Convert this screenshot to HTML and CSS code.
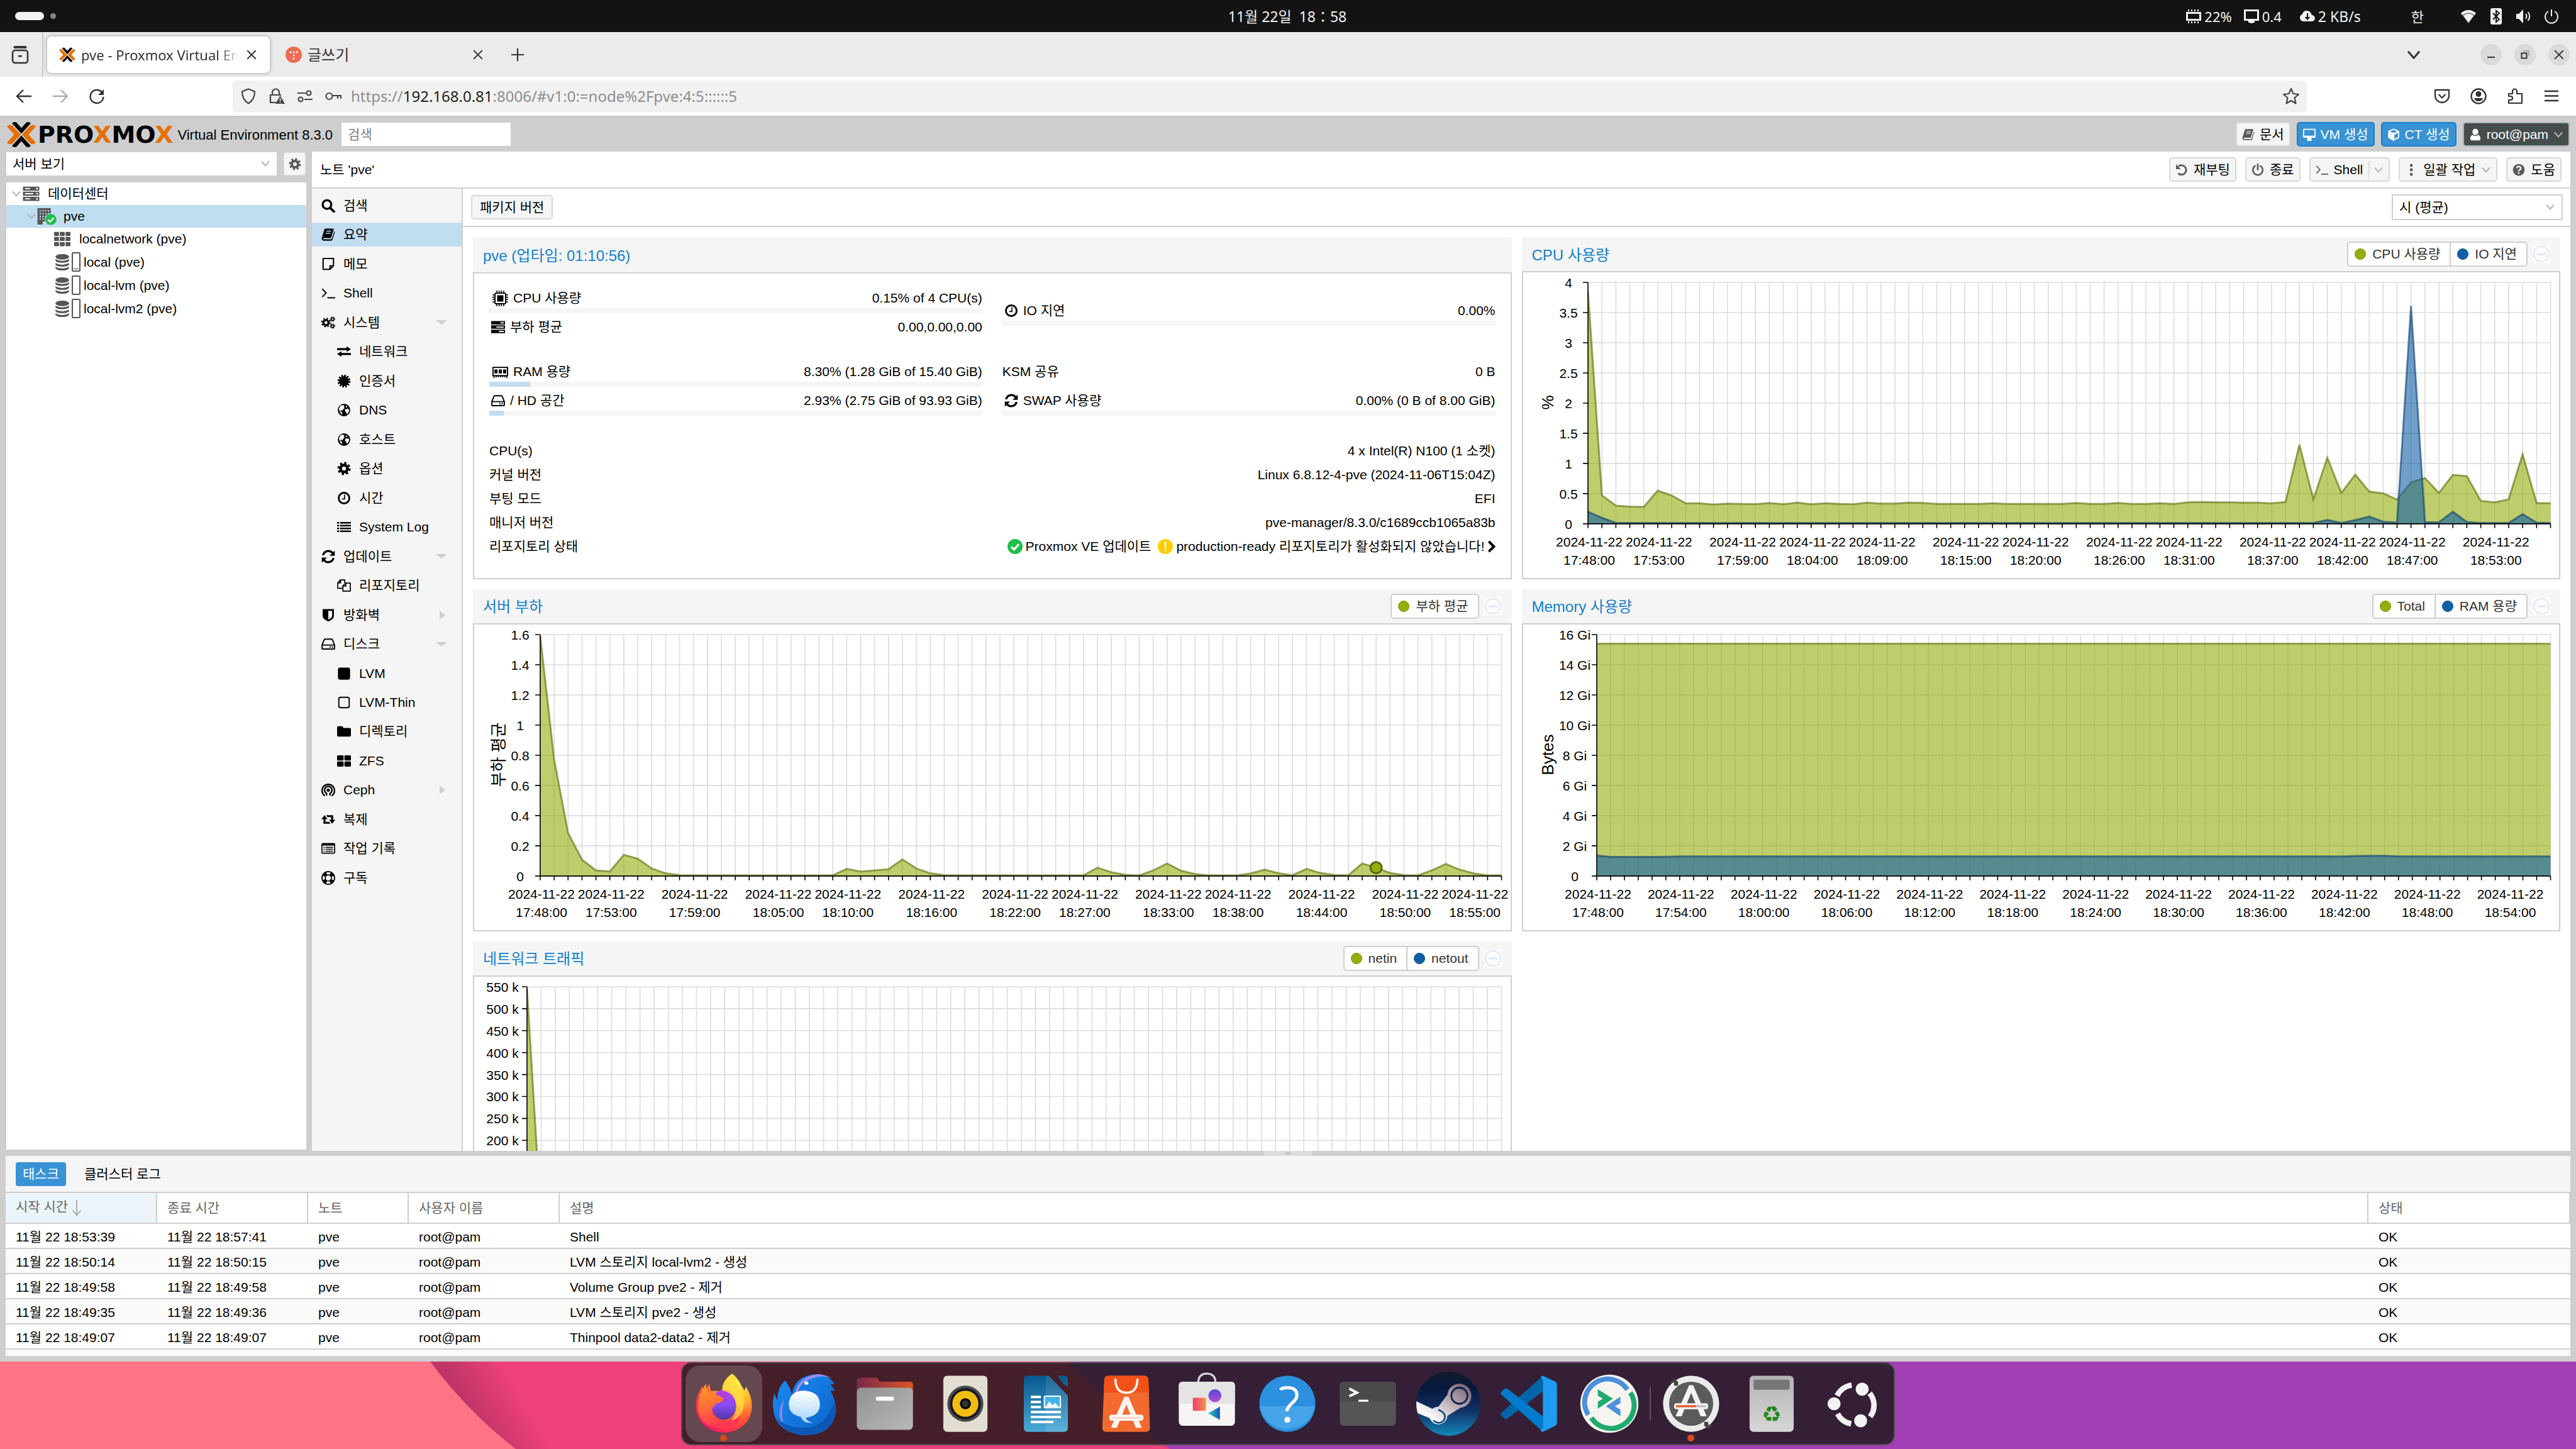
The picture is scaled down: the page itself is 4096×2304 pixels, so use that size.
FILE: index.html
```html
<!DOCTYPE html>
<html lang="ko">
<head>
<meta charset="utf-8">
<title>pve - Proxmox Virtual Environment</title>
<link rel="stylesheet" href="styles.css">
</head>
<body>
<svg class="sprite" aria-hidden="true">
  <symbol id="i-server" viewBox="0 0 16 16"><path fill-rule="evenodd" d="M0 1h16v4H0zM2 2.4v1.2h5V2.4zM13 2.2v1.6h1.5V2.2zM0 6h16v4H0zM2 7.4v1.2h8V7.4zM13 7.2v1.6h1.5V7.2zM0 11h16v4H0zM2 12.4v1.2h5v-1.2zM13 12.2v1.6h1.5v-1.6z"/></symbol>
  <symbol id="i-tasks" viewBox="0 0 16 16"><path fill-rule="evenodd" d="M0 1h16v4H0zM11 2.4v1.4h3.6V2.4zM0 6h16v4H0zM6 7.4v1.4h8.6V7.4zM0 11h16v4H0zM9 12.4v1.4h5.6v-1.4z"/></symbol>
  <symbol id="i-building" viewBox="0 0 16 16"><path fill-rule="evenodd" d="M1 0h13v16h-4v-3H6v3H1zM3 2v1.3h1.4V2zM5.700 2v1.3h1.4V2zM8.300 2v1.3h1.4V2zM11 2v1.300h1.400V2zM3 4.700V6h1.400V4.700zM5.700 4.700V6h1.400V4.700zM8.300 4.700V6h1.400V4.700zM11 4.700V6h1.400V4.700zM3 7.400v1.300h1.400V7.400zM5.700 7.400v1.300h1.400V7.400zM8.300 7.400v1.300h1.400V7.400zM11 7.400v1.300h1.400V7.400zM3 10v1.300h1.400V10zM5.700 10v1.300h1.400V10zM8.300 10v1.300h1.400V10zM11 10v1.300h1.400V10z"/></symbol>
  <symbol id="i-th" viewBox="0 0 16 16"><path d="M.6 1h3.600q.6 0 .6.600v2.800q0 .6-.6.600H.6Q0 5 0 4.400V1.600Q0 1 .6 1zM6.200 1h3.600q.6 0 .6.600v2.800q0 .6-.6.600H6.200q-.6 0-.6-.600V1.600q0-.6.6-.600zM11.800 1h3.600q.6 0 .6.600v2.800q0 .6-.6.600h-3.600q-.6 0-.6-.600V1.600q0-.6.6-.600zM.6 6h3.600q.6 0 .6.600v2.800q0 .6-.6.600H.6Q0 10 0 9.400V6.600Q0 6 .6 6zM6.200 6h3.600q.6 0 .6.600v2.800q0 .6-.6.600H6.200q-.6 0-.6-.600V6.600q0-.6.6-.600zM11.800 6h3.600q.6 0 .6.600v2.800q0 .6-.6.600h-3.600q-.6 0-.6-.600V6.600q0-.6.6-.600zM.6 11h3.600q.6 0 .6.600v2.800q0 .6-.6.600H.6Q0 15 0 14.400v-2.800Q0 11 .6 11zM6.200 11h3.600q.6 0 .6.600v2.800q0 .6-.6.600H6.200q-.6 0-.6-.600v-2.800q0-.6.6-.600zM11.800 11h3.600q.6 0 .6.600v2.800q0 .6-.6.600h-3.600q-.6 0-.6-.600v-2.800q0-.6.6-.600z"/></symbol>
  <symbol id="i-db" viewBox="0 0 16 18"><ellipse cx="8" cy="3" rx="7.500" ry="3"/><path d="M.5 5.500q7.500 4 15 0v1.800q-1.500 2.300-7.500 2.300T.5 7.300zM.5 9.800q7.500 4 15 0v1.800q-1.500 2.300-7.500 2.300T.5 11.600zM.5 14q7.500 4 15 0v1.500Q14 18 8 18T.5 15.500z"/></symbol>
  <symbol id="i-search" viewBox="0 0 16 16"><circle cx="6.500" cy="6.700" r="5" fill="none" stroke="currentColor" stroke-width="2.400"/><path d="M10 10.500l4.500 4.300" stroke="currentColor" stroke-width="2.800" stroke-linecap="round"/></symbol>
  <symbol id="i-book" viewBox="0 0 16 16"><path fill-rule="evenodd" d="M5 1h8.500q1 0 .7 1l-2.700 9q-.3 1-1.300 1H2.600q-.9 0-.6.800t1 .7h8.200q.7 0 .9-.7L15 4q.8.400.5 1.300l-2.700 8.700q-.4 1-1.400 1H2.500Q1 15 .5 13.300q-.2-1 0-1.500L3.500 2Q3.900 1 5 1zM6 3.500l-.3 1h5.500l.3-1zM5.300 6L5 7h5.500l.3-1z"/></symbol>
  <symbol id="i-note" viewBox="0 0 16 16"><path d="M2 1.500h12v8.500l-4 4H2zM14 10h-4v4" fill="none" stroke="currentColor" stroke-width="1.500" stroke-linejoin="round"/></symbol>
  <symbol id="i-term" viewBox="0 0 16 16"><path d="M1 3l4.500 5L1 12.500M7 13.500h9" fill="none" stroke="currentColor" stroke-width="1.400"/></symbol>
  <symbol id="i-cog" viewBox="0 0 16 16"><circle cx="8" cy="8" r="4" fill="none" stroke="currentColor" stroke-width="3.200"/><circle cx="8" cy="8" r="6.400" fill="none" stroke="currentColor" stroke-width="2.400" stroke-dasharray="2.620 2.406"/></symbol>
  <symbol id="i-cogs" viewBox="0 0 18 16"><g fill="none" stroke="currentColor"><circle cx="6" cy="8" r="3.300" stroke-width="2.600"/><circle cx="6" cy="8" r="5.200" stroke-width="2" stroke-dasharray="2.100 1.984"/><circle cx="14.500" cy="3.500" r="1.700" stroke-width="1.300"/><circle cx="14.500" cy="3.500" r="2.800" stroke-width="1.200" stroke-dasharray="1.200 1"/><circle cx="14.500" cy="12.500" r="1.700" stroke-width="1.300"/><circle cx="14.500" cy="12.500" r="2.800" stroke-width="1.200" stroke-dasharray="1.200 1"/></g></symbol>
  <symbol id="i-exchange" viewBox="0 0 16 16"><path d="M0 4h11V2l5 3.200-5 3.200V6.400H0zM16 9.600H5V7.600L0 10.800 5 14v-2h11z"/></symbol>
  <symbol id="i-cert" viewBox="0 0 16 16"><circle cx="8" cy="8" r="5.600"/><circle cx="8" cy="8" r="6.300" fill="none" stroke="currentColor" stroke-width="2.400" stroke-dasharray="1.900 1.399"/></symbol>
  <symbol id="i-globe" viewBox="0 0 16 16"><path fill-rule="evenodd" d="M8 .8a7.200 7.200 0 1 0 0 14.400A7.200 7.200 0 0 0 8 .8zM4 2.800L7 2.200l1.500 1-.8 1.600 1.200 1-2 1.200-.6 1.800-2-.8-.6 1.400 1.800.8.6 3-1.600-.8L2.800 9 2 6.500zM9.500 7l3-.6 1.500 1.200-.6 3-2 2.400-1-2.600-1.400-1.200zM10 3l2 1-.8 1-1.400-.6z"/></symbol>
  <symbol id="i-clock" viewBox="0 0 16 16"><circle cx="8" cy="8" r="6.200" fill="none" stroke="currentColor" stroke-width="2.100"/><path d="M8.700 4v5H5.600" fill="none" stroke="currentColor" stroke-width="1.200"/></symbol>
  <symbol id="i-list" viewBox="0 0 18 16"><path d="M0 1.500h2.600v2H0zM3.800 1.500H18v2H3.800zM0 5.200h2.600v2H0zM3.800 5.200H18v2H3.800zM0 8.900h2.600v2H0zM3.800 8.900H18v2H3.800zM0 12.600h2.600v2H0zM3.800 12.600H18v2H3.800z"/></symbol>
  <symbol id="i-refresh" viewBox="0 0 16 16"><path d="M2 6.500A6.200 6.200 0 0 1 13 4M14 9.500A6.200 6.200 0 0 1 3 12" fill="none" stroke="currentColor" stroke-width="2.400"/><path d="M15.500 1v6h-6zM.5 15V9h6z"/></symbol>
  <symbol id="i-copy" viewBox="0 0 18 16"><path d="M7.500 11.500H.8V4.500L4.300.8H10v4M.8 4.700h3.700V.9M7.500 15.200h9.700V4.800h-6L7.500 8.500zM7.600 8.700h3.800V5" fill="none" stroke="currentColor" stroke-width="1.400" stroke-linejoin="round"/></symbol>
  <symbol id="i-shield" viewBox="0 0 16 16"><path fill-rule="evenodd" d="M1.500 1h13v8q0 3.500-6.500 6.500Q1.500 12.500 1.500 9zM8 3v10.200q4.500-2.200 4.500-4.500V3z"/></symbol>
  <symbol id="i-hdd" viewBox="0 0 16 16"><path d="M.8 9.200L3.200 3q.2-.7 1-.7h7.600q.8 0 1 .7l2.400 6.200v4q0 .6-.6.600H1.400q-.6 0-.6-.600zM.8 9.200h14.400" fill="none" stroke="currentColor" stroke-width="1.400"/><path d="M9.400 10.700h1.500v1.500H9.400zM12 10.700h1.500v1.500H12z"/></symbol>
  <symbol id="i-square" viewBox="0 0 16 16"><rect x="1" y="1" width="14" height="14" rx="2.500"/></symbol>
  <symbol id="i-square-o" viewBox="0 0 16 16"><rect x="2" y="2" width="12" height="12" rx="2" fill="none" stroke="currentColor" stroke-width="1.400"/></symbol>
  <symbol id="i-folder" viewBox="0 0 16 16"><path d="M1.500 2h4q1.500 0 1.500 1.500V4h7.500Q16 4 16 5.500v7q0 1.500-1.500 1.500h-13Q0 14 0 12.500v-9Q0 2 1.500 2z"/></symbol>
  <symbol id="i-thl" viewBox="0 0 16 16"><rect x="0" y="1.500" width="7.500" height="6" rx="1"/><rect x="8.500" y="1.500" width="7.500" height="6" rx="1"/><rect x="0" y="8.500" width="7.500" height="6" rx="1"/><rect x="8.500" y="8.500" width="7.500" height="6" rx="1"/></symbol>
  <symbol id="i-ceph" viewBox="0 0 16 16"><g fill="none" stroke="currentColor" stroke-width="1.700"><path d="M4 14.800A7.200 7.200 0 1 1 12 14.800"/><path d="M6 14.500V12A4.300 4.300 0 1 1 10 12v2.500"/></g><circle cx="8" cy="8.200" r="1.900"/></symbol>
  <symbol id="i-retweet" viewBox="0 0 18 16"><path d="M4 2.500L8 7.500H5.300V11H10l2 2.500H2.700v-6H0zM14 13.500l-4-5h2.700V5H8L6 2.500h9.300v6H18z"/></symbol>
  <symbol id="i-listalt" viewBox="0 0 18 16"><rect x=".7" y="1.700" width="16.600" height="12.600" rx="1.200" fill="none" stroke="currentColor" stroke-width="1.400"/><path d="M1 1.500h16v2.800H1zM2.800 6h1.400v1.200H2.800zM5.400 6h9.800v1.200H5.400zM2.800 8.500h1.400v1.200H2.800zM5.400 8.500h9.800v1.200H5.400zM2.800 11h1.400v1.200H2.800zM5.400 11h9.800v1.200H5.400z"/></symbol>
  <symbol id="i-ring" viewBox="0 0 16 16"><g fill="none" stroke="currentColor"><circle cx="8" cy="8" r="7.300" stroke-width="1.300"/><circle cx="8" cy="8" r="3.600" stroke-width="1.200"/><circle cx="8" cy="8" r="5.500" stroke-width="3.600" stroke-dasharray="4.320 4.320" stroke-dashoffset="-2.160"/></g></symbol>
  <symbol id="i-cpu" viewBox="0 0 16 16"><rect x="2.600" y="2.600" width="10.800" height="10.800" rx="1" fill="none" stroke="currentColor" stroke-width="1.200"/><path d="M4.800 4.800h6.400v6.400H4.800zM4 0h1v2.500H4zM6.300 0h1v2.500h-1zM8.600 0h1v2.500h-1zM11 0h1v2.500h-1zM4 13.500h1V16H4zM6.300 13.500h1V16h-1zM8.600 13.500h1V16h-1zM11 13.500h1V16h-1zM0 4h2.500v1H0zM0 6.300h2.500v1H0zM0 8.600h2.500v1H0zM0 11h2.500v1H0zM13.500 4H16v1h-2.500zM13.500 6.300H16v1h-2.500zM13.500 8.600H16v1h-2.500zM13.500 11H16v1h-2.500z"/></symbol>
  <symbol id="i-ram" viewBox="0 0 16 16"><rect x=".6" y="3.300" width="14.800" height="8.400" fill="none" stroke="currentColor" stroke-width="1.200"/><path d="M2 5.500h3.200v4H2zM6.400 5.500h3.200v4H6.400zM10.800 5.500H14v4h-3.200zM1 12h1.200v2H1zM3.200 12h1.200v1.500H3.200zM5.400 12h1.200v1.500H5.400zM7.600 12h1.200v1.500H7.600zM9.800 12H11v1.500H9.800zM12 12h1.200v1.500H12zM14 12h1.200v2H14z"/></symbol>
  <symbol id="i-desktop" viewBox="0 0 16 16"><path fill-rule="evenodd" d="M1 .5h14q1 0 1 1V11q0 1-1 1h-4.500l.5 2.500V16H5v-1.500l.5-2.500H1q-1 0-1-1V1.500q0-1 1-1zM1.400 1.900v7.500h13.200V1.900z"/></symbol>
  <symbol id="i-cube" viewBox="0 0 16 16"><path fill-rule="evenodd" d="M8 .3l7 3v8.800l-7 3.800-7-3.800V3.300zM8 2L3.300 4 8 6l4.700-2zM9 8v5.600l4.600-2.500V5.800z"/></symbol>
  <symbol id="i-user" viewBox="0 0 16 16"><ellipse cx="8" cy="4.500" rx="3.700" ry="4"/><path d="M4.500 8.300Q8 11 11.500 8.300q3 1 3 5 0 2-2 2h-9q-2 0-2-2 0-4 3-5z"/></symbol>
  <symbol id="i-undo" viewBox="0 0 16 16"><path d="M4 3.500a6 6 0 1 1-.5 9" fill="none" stroke="currentColor" stroke-width="2.300"/><path d="M.8 1v6.200H7z"/></symbol>
  <symbol id="i-power" viewBox="0 0 16 16"><path d="M4.500 3.200a6.200 6.200 0 1 0 7 0M8 .8v7" fill="none" stroke="currentColor" stroke-width="2.100" stroke-linecap="round"/></symbol>
  <symbol id="i-dots" viewBox="0 0 16 16"><rect x="6.500" y=".5" width="3.200" height="3.600" rx=".8"/><rect x="6.500" y="6.200" width="3.200" height="3.600" rx=".8"/><rect x="6.500" y="11.900" width="3.200" height="3.600" rx=".8"/></symbol>
  <symbol id="i-help" viewBox="0 0 16 16"><circle cx="8" cy="8" r="7.500"/><path d="M5.500 6q.3-2.300 2.500-2.300T10.500 6q0 1.300-1.300 2T8 9.800" fill="none" stroke="#f5f5f5" stroke-width="1.900"/><path d="M7 11h2v2H7z" fill="#f5f5f5"/></symbol>
  <symbol id="i-down" viewBox="0 0 16 16"><path d="M2 4.500l6 7 6-7" fill="none" stroke="currentColor" stroke-width="2"/></symbol>
  <symbol id="i-ok" viewBox="0 0 16 16"><circle cx="8" cy="8" r="8" fill="#21bf4b"/><path d="M4 8.300L7 11.300l5-5.800" fill="none" stroke="#fff" stroke-width="2.200"/></symbol>
  <symbol id="i-warn" viewBox="0 0 16 16"><circle cx="8" cy="8" r="8" fill="#ffcc00"/><path d="M6.900 3h2.200L8.800 9.500H7.200zM7 11h2v2H7z" fill="#fff"/></symbol>
  <symbol id="i-next" viewBox="0 0 16 16"><path d="M5 1.500L11.500 8 5 14.500" fill="none" stroke="currentColor" stroke-width="3.200"/></symbol>
  <symbol id="i-x" viewBox="0 0 16 16"><path d="M3 3l10 10M13 3L3 13" fill="none" stroke="currentColor" stroke-width="1.500" stroke-linecap="round"/></symbol>
  <symbol id="i-collapse" viewBox="0 0 28 28"><rect width="28" height="28" fill="#fff" opacity=".6"/><circle cx="14" cy="14" r="12" fill="none" stroke="#dfe6f4" stroke-width="2"/><path d="M7 14h14" stroke="#dfe6f4" stroke-width="3"/></symbol>
  <symbol id="i-proxmox" viewBox="0 0 46 42"><path fill="#000" d="M8 3q3-3 7-1.500l8 9 8-9Q35 0 38 3L23 19.500zM8 39q3 3 7 1.500l8-9 8 9Q35 42 38 39L23 22.500z"/><path fill="#e57000" d="M0 8q4-4 9-1l13 14L9 35q-5 3-9-1l11.500-13zM46 8q-4-4-9-1L24 21l13 14q5 3 9-1L34.500 21z"/></symbol>
</svg>

<header class="sysbar">
  <div class="sysbar-left"><span class="ws-pill"></span><span class="ws-dot"></span></div>
  <time class="sysbar-clock">11월 22일&nbsp; 18：58</time>
  <div class="sysbar-right">
    <svg class="s26" viewBox="0 0 26 26"><path fill-rule="evenodd" d="M1 6h24v14H1zM4 9v8h18V9zM4 2h2v3H4zM9 2h2v3H9zM14 2h2v3h-2zM19 2h2v3h-2zM4 21h2v3H4zM9 21h2v3H9zM14 21h2v3h-2zM19 21h2v3h-2z"/></svg><span class="m1">22%</span>
    <svg class="s26" viewBox="0 0 26 26"><path fill-rule="evenodd" d="M2 2h22q1 0 1 1v17h-7v3h-3v1h-4v-1H8v-3H1V3q0-1 1-1zM4 5v12h18V5z"/></svg><span class="m2">0.4</span>
    <svg class="s26" viewBox="0 0 26 26"><path fill-rule="evenodd" d="M7 21q-6-.500-6-6 0-4 4-5.500Q6 4 12 4t7.500 6.500Q25 12 25 16q-.5 5-6 5zM12 8v6H8.500l4.500 5 4.500-5H14V8z"/></svg><span class="m3">2 KB/s</span>
    <span class="m4">한</span>
    <svg class="s26" viewBox="0 0 26 26"><path d="M1 8Q13-2 25 8L13 24z" opacity=".5"/><path d="M1 8Q13-2 25 8l-2.500 3Q13 3.500 3.500 11zM5 12q8-6 16 0l-8 11z"/></svg>
    <svg class="s26" viewBox="0 0 26 26"><rect x="4" y="0" width="18" height="26" rx="3"/><path d="M8 8l10 10-5 4V4l5 4L8 18" fill="none" stroke="#131313" stroke-width="2"/></svg>
    <svg class="s26" viewBox="0 0 26 26"><path d="M1 9h4l7-7v22l-7-7H1z"/><path d="M16 9q3 4 0 8M19.500 6q5.500 7 0 14" fill="none" stroke="currentColor" stroke-width="2"/></svg>
    <svg class="s26" viewBox="0 0 26 26"><path d="M8 5a10 10 0 1 0 10 0M13 2v11" fill="none" stroke="currentColor" stroke-width="2"/></svg>
  </div>
</header>

<div class="tabbar">
  <button class="tabview" aria-label="탭 목록"><svg class="s30" viewBox="0 0 30 30"><path d="M5 4h20M5 4q.5-2 2-2h16q1.500 0 2 2" fill="none" stroke="currentColor" stroke-width="2"/><rect x="3" y="8" width="24" height="20" rx="4" fill="none" stroke="currentColor" stroke-width="2.500"/><path d="M12 16h6v2.500h-6z"/></svg></button>
  <div class="tabs">
    <div class="tab active"><svg class="favicon" aria-hidden="true"><use href="#i-proxmox"/></svg><span class="tab-title">pve - Proxmox Virtual Env</span><button aria-label="탭 닫기"><svg class="s20"><use href="#i-x"/></svg></button></div>
    <div class="tab"><svg class="favicon" viewBox="0 0 26 26"><circle cx="13" cy="13" r="13" fill="#ee6a50"/><g fill="#fff"><circle cx="8" cy="9" r="1.600"/><circle cx="13" cy="9" r="1.600"/><circle cx="18" cy="9" r="1.600"/><circle cx="13" cy="14" r="1.600"/><circle cx="13" cy="19" r="1.600"/></g></svg><span class="tab-title">글쓰기</span><button aria-label="탭 닫기"><svg class="s20"><use href="#i-x"/></svg></button></div>
    <button class="newtab" aria-label="새 탭"><svg class="s20" viewBox="0 0 20 20"><path d="M10 0v20M0 10h20" stroke="currentColor" stroke-width="2.200"/></svg></button>
  </div>
  <div class="winctl">
    <button class="plain" aria-label="탭 보기"><svg class="s24"><use href="#i-down"/></svg></button>
    <button aria-label="최소화"><svg class="s16" viewBox="0 0 16 16"><path d="M2 12h12" stroke="currentColor" stroke-width="2"/></svg></button>
    <button aria-label="이전 크기"><svg class="s16" viewBox="0 0 16 16"><path d="M2.500 5.500h8v8h-8z" fill="none" stroke="currentColor" stroke-width="2"/><path d="M6 2h8v8" fill="none" stroke="#999" stroke-width="1.500"/></svg></button>
    <button aria-label="닫기"><svg class="s20"><use href="#i-x"/></svg></button>
  </div>
</div>

<nav class="navbar">
  <div class="navbtns">
    <button aria-label="뒤로"><svg class="s26" viewBox="0 0 26 26"><path d="M25 13H3M12 3L2 13l10 10" fill="none" stroke="currentColor" stroke-width="2.400"/></svg></button>
    <button class="dim" aria-label="앞으로"><svg class="s26" viewBox="0 0 26 26"><path d="M1 13h22M14 3l10 10-10 10" fill="none" stroke="currentColor" stroke-width="2.400"/></svg></button>
    <button aria-label="새로 고침"><svg class="s26" viewBox="0 0 26 26"><path d="M22 8a10.500 10.500 0 1 0 1.500 6" fill="none" stroke="currentColor" stroke-width="2.400"/><path d="M24 2v9h-9z"/></svg></button>
  </div>
  <div class="urlbar">
    <svg class="s26" viewBox="0 0 26 26"><path d="M13 1.500l10 4q0 13-10 19Q3 18.500 3 5.500z" fill="none" stroke="currentColor" stroke-width="2.200" stroke-linejoin="round"/></svg>
    <svg class="s26" viewBox="0 0 26 26"><path d="M12 23H3V11h17M6 11V7a5.500 5.500 0 0 1 11 0v4" fill="none" stroke="currentColor" stroke-width="2.200"/><path fill-rule="evenodd" d="M18.500 12L26 25H11zM17.700 16v5h1.600v-5zM17.700 22v1.600h1.600V22z"/></svg>
    <svg class="s26" viewBox="0 0 26 26"><g fill="none" stroke="currentColor" stroke-width="2.200"><path d="M1 8h13M12 18h13"/><circle cx="19" cy="8" r="3.500"/><circle cx="6" cy="18" r="3.500"/></g></svg>
    <svg class="s26" viewBox="0 0 26 26"><g fill="none" stroke="currentColor" stroke-width="2.200"><circle cx="6.500" cy="13" r="5"/><path d="M11.500 12H25v5M20 12v5"/></g></svg>
    <div class="url" role="textbox" aria-label="주소" tabindex="0">https://<b>192.168.0.81</b>:8006/#v1:0:=node%2Fpve:4:5::::::5</div>
    <svg class="s28" viewBox="0 0 28 28"><path d="M14 2l3.500 8 8.500 1-6.500 5.500 2 9L14 21l-7.500 4.500 2-9L2 11l8.500-1z" fill="none" stroke="currentColor" stroke-width="2.200" stroke-linejoin="round"/></svg>
  </div>
  <div class="navright">
    <svg class="s26" viewBox="0 0 26 26"><path d="M2 3h22v9a11 11 0 0 1-22 0zM7.500 10l5.500 5.500L18.500 10" fill="none" stroke="currentColor" stroke-width="2.300" stroke-linejoin="round"/></svg>
    <svg class="s26" viewBox="0 0 26 26"><circle cx="13" cy="13" r="11.500" fill="none" stroke="currentColor" stroke-width="2.300"/><circle cx="13" cy="9.500" r="4.500"/><path d="M6 16h14q-1 5-7 5t-7-5z"/></svg>
    <svg class="s26" viewBox="0 0 26 26"><path d="M3 9h6V5a3.500 3.500 0 0 1 7 0v4h8v15H3v-5h3a3 3 0 0 0 0-6H3z" fill="none" stroke="currentColor" stroke-width="2.200" stroke-linejoin="round"/></svg>
    <svg class="s26" viewBox="0 0 26 26"><path d="M2 5h22M2 12.500h22M2 20h22" stroke="currentColor" stroke-width="2.300"/></svg>
  </div>
</nav>

<div class="app">
  <header class="app-head">
    <svg class="logo-x" aria-hidden="true"><use href="#i-proxmox"/></svg>
    <span class="wordmark">PRO<i>X</i>MO<i>X</i></span>
    <span class="version">Virtual Environment 8.3.0</span>
    <input class="search" type="search" placeholder="검색" aria-label="검색">
    <div class="head-btns">
      <button class="btn"><svg class="icon"><use href="#i-book"/></svg>문서</button>
      <button class="btn blue"><svg class="icon"><use href="#i-desktop"/></svg>VM 생성</button>
      <button class="btn blue"><svg class="icon"><use href="#i-cube"/></svg>CT 생성</button>
      <button class="btn dark"><svg class="icon"><use href="#i-user"/></svg>root@pam<svg class="caret"><use href="#i-down"/></svg></button>
    </div>
  </header>

  <div class="main">
    <aside class="side">
      <div class="side-top">
        <div class="combo view"><select aria-label="보기"><option>서버 보기</option></select><svg class="caret"><use href="#i-down"/></svg></div>
        <button class="btn gear" aria-label="설정"><svg class="icon"><use href="#i-cog"/></svg></button>
      </div>
      <ul class="tree">
        <li class="l0"><svg class="twist"><use href="#i-down"/></svg><svg class="ticon"><use href="#i-server"/></svg><a href="#dc">데이터센터</a></li>
        <li class="l1 sel"><svg class="twist"><use href="#i-down"/></svg><span class="node"><svg class="ticon"><use href="#i-building"/></svg><svg class="badge"><use href="#i-ok"/></svg></span><a href="#pve">pve</a></li>
        <li class="l2"><svg class="ticon"><use href="#i-th"/></svg><a class="net" href="#net">localnetwork (pve)</a></li>
        <li class="l2 st"><svg class="ticon"><use href="#i-db"/></svg><span class="gauge used"></span><a href="#local">local (pve)</a></li>
        <li class="l2 st"><svg class="ticon"><use href="#i-db"/></svg><span class="gauge"></span><a href="#lvm">local-lvm (pve)</a></li>
        <li class="l2 st"><svg class="ticon"><use href="#i-db"/></svg><span class="gauge"></span><a href="#lvm2">local-lvm2 (pve)</a></li>
      </ul>
    </aside>

    <section class="content">
      <header class="content-head">
        <h1>노트 'pve'</h1>
        <button class="btn"><svg class="icon"><use href="#i-undo"/></svg>재부팅</button>
        <button class="btn"><svg class="icon"><use href="#i-power"/></svg>종료</button>
        <button class="btn split"><svg class="icon"><use href="#i-term"/></svg>Shell<svg class="caret"><use href="#i-down"/></svg></button>
        <button class="btn"><svg class="icon"><use href="#i-dots"/></svg>일괄 작업<svg class="caret"><use href="#i-down"/></svg></button>
        <button class="btn"><svg class="icon"><use href="#i-help"/></svg>도움</button>
      </header>
      <div class="content-body">
        <nav class="menu">
          <a href="#search"><svg class="icon"><use href="#i-search"/></svg>검색</a>
          <a href="#summary" class="sel"><svg class="icon"><use href="#i-book"/></svg>요약</a>
          <a href="#notes"><svg class="icon"><use href="#i-note"/></svg>메모</a>
          <a href="#shell"><svg class="icon"><use href="#i-term"/></svg>Shell</a>
          <a href="#system" class="open"><svg class="icon"><use href="#i-cogs"/></svg>시스템</a>
          <a href="#network" class="sub"><svg class="icon"><use href="#i-exchange"/></svg>네트워크</a>
          <a href="#certs" class="sub"><svg class="icon"><use href="#i-cert"/></svg>인증서</a>
          <a href="#dns" class="sub"><svg class="icon"><use href="#i-globe"/></svg>DNS</a>
          <a href="#hosts" class="sub"><svg class="icon"><use href="#i-globe"/></svg>호스트</a>
          <a href="#options" class="sub"><svg class="icon"><use href="#i-cog"/></svg>옵션</a>
          <a href="#time" class="sub"><svg class="icon"><use href="#i-clock"/></svg>시간</a>
          <a href="#syslog" class="sub"><svg class="icon"><use href="#i-list"/></svg>System Log</a>
          <a href="#updates" class="open"><svg class="icon"><use href="#i-refresh"/></svg>업데이트</a>
          <a href="#repos" class="sub"><svg class="icon"><use href="#i-copy"/></svg>리포지토리</a>
          <a href="#firewall" class="closed"><svg class="icon"><use href="#i-shield"/></svg>방화벽</a>
          <a href="#disks" class="open"><svg class="icon"><use href="#i-hdd"/></svg>디스크</a>
          <a href="#lvm-disks" class="sub"><svg class="icon"><use href="#i-square"/></svg>LVM</a>
          <a href="#lvmthin" class="sub"><svg class="icon"><use href="#i-square-o"/></svg>LVM-Thin</a>
          <a href="#directory" class="sub"><svg class="icon"><use href="#i-folder"/></svg>디렉토리</a>
          <a href="#zfs" class="sub"><svg class="icon"><use href="#i-thl"/></svg>ZFS</a>
          <a href="#ceph" class="closed"><svg class="icon"><use href="#i-ceph"/></svg>Ceph</a>
          <a href="#replication"><svg class="icon"><use href="#i-retweet"/></svg>복제</a>
          <a href="#tasks"><svg class="icon"><use href="#i-listalt"/></svg>작업 기록</a>
          <a href="#subscription"><svg class="icon"><use href="#i-ring"/></svg>구독</a>
        </nav>

        <div class="summary">
          <div class="summary-bar">
            <button class="btn">패키지 버전</button>
            <div class="combo range"><select aria-label="기간"><option>시 (평균)</option></select><svg class="caret"><use href="#i-down"/></svg></div>
          </div>
          <div class="panels">
            <section class="panel status">
              <h2>pve (업타임: 01:10:56)</h2>
              <div class="status-body">
                <div class="meters">
                  <div class="meter"><span><svg class="big"><use href="#i-cpu"/></svg>CPU 사용량</span><span>0.15% of 4 CPU(s)</span><div class="bar"><div style="width:0.15%"></div></div></div>
                  <div class="meter"><span><svg><use href="#i-tasks"/></svg>부하 평균</span><span>0.00,0.00,0.00</span></div>
                  <div class="meter gap"><span><svg class="big"><use href="#i-ram"/></svg>RAM 용량</span><span>8.30% (1.28 GiB of 15.40 GiB)</span><div class="bar"><div style="width:8.3%"></div></div></div>
                  <div class="meter"><span><svg><use href="#i-hdd"/></svg>/ HD 공간</span><span>2.93% (2.75 GiB of 93.93 GiB)</span><div class="bar"><div style="width:2.93%"></div></div></div>
                </div>
                <div class="meters right">
                  <div class="meter io"><span><svg><use href="#i-clock"/></svg>IO 지연</span><span>0.00%</span><div class="bar"></div></div>
                  <div class="meter"><span>KSM 공유</span><span>0 B</span></div>
                  <div class="meter"><span><svg><use href="#i-refresh"/></svg>SWAP 사용량</span><span>0.00% (0 B of 8.00 GiB)</span><div class="bar"></div></div>
                </div>
                <dl>
                  <div><dt>CPU(s)</dt><dd>4 x Intel(R) N100 (1 소켓)</dd></div>
                  <div><dt>커널 버전</dt><dd>Linux 6.8.12-4-pve (2024-11-06T15:04Z)</dd></div>
                  <div><dt>부팅 모드</dt><dd>EFI</dd></div>
                  <div><dt>매니저 버전</dt><dd>pve-manager/8.3.0/c1689ccb1065a83b</dd></div>
                  <div><dt>리포지토리 상태</dt><dd><svg><use href="#i-ok"/></svg>Proxmox VE 업데이트<svg class="second"><use href="#i-warn"/></svg>production-ready 리포지토리가 활성화되지 않았습니다!<svg class="nxt"><use href="#i-next"/></svg></dd></div>
                </dl>
              </div>
            </section>

            <section class="panel">
              <header><h2>CPU 사용량</h2><ul class="legend"><li class="g">CPU 사용량</li><li class="b">IO 지연</li></ul><svg class="collapse"><use href="#i-collapse"/></svg></header>
              <svg class="chart" id="chart-cpu" viewBox="0 0 1648 486"></svg>
            </section>
            <section class="panel">
              <header><h2>서버 부하</h2><ul class="legend"><li class="g">부하 평균</li></ul><svg class="collapse"><use href="#i-collapse"/></svg></header>
              <svg class="chart" id="chart-load" viewBox="0 0 1648 486"></svg>
            </section>
            <section class="panel">
              <header><h2>Memory 사용량</h2><ul class="legend"><li class="g">Total</li><li class="b">RAM 용량</li></ul><svg class="collapse"><use href="#i-collapse"/></svg></header>
              <svg class="chart" id="chart-mem" viewBox="0 0 1648 486"></svg>
            </section>
            <section class="panel">
              <header><h2>네트워크 트래픽</h2><ul class="legend"><li class="g">netin</li><li class="b">netout</li></ul><svg class="collapse"><use href="#i-collapse"/></svg></header>
              <svg class="chart" id="chart-net" viewBox="0 0 1648 486"></svg>
            </section>
          </div>
        </div>
      </div>
    </section>
  </div>

  <div class="splitter"><span><svg viewBox="0 0 16 8"><path d="M2 2h12l-6 5z"/></svg></span></div>
  <section class="log">
    <div class="log-tabs"><button class="on">태스크</button><button>클러스터 로그</button></div>
    <table>
      <colgroup><col class="c-time"><col class="c-end"><col class="c-node"><col class="c-user"><col><col class="c-state"></colgroup>
      <thead><tr><th class="sorted">시작 시간<svg class="sort" viewBox="0 0 16 28"><path d="M8 0v26M1 18l7 8 7-8" fill="none" stroke="#aaa" stroke-width="2"/></svg></th><th>종료 시간</th><th>노트</th><th>사용자 이름</th><th>설명</th><th>상태</th></tr></thead>
      <tbody>
        <tr><td>11월 22 18:53:39</td><td>11월 22 18:57:41</td><td>pve</td><td>root@pam</td><td>Shell</td><td>OK</td></tr>
        <tr><td>11월 22 18:50:14</td><td>11월 22 18:50:15</td><td>pve</td><td>root@pam</td><td>LVM 스토리지 local-lvm2 - 생성</td><td>OK</td></tr>
        <tr><td>11월 22 18:49:58</td><td>11월 22 18:49:58</td><td>pve</td><td>root@pam</td><td>Volume Group pve2 - 제거</td><td>OK</td></tr>
        <tr><td>11월 22 18:49:35</td><td>11월 22 18:49:36</td><td>pve</td><td>root@pam</td><td>LVM 스토리지 pve2 - 생성</td><td>OK</td></tr>
        <tr><td>11월 22 18:49:07</td><td>11월 22 18:49:07</td><td>pve</td><td>root@pam</td><td>Thinpool data2-data2 - 제거</td><td>OK</td></tr>
      </tbody>
    </table>
  </section>
</div>

<footer class="desktop">
  <svg class="wallpaper" viewBox="0 0 4096 139" preserveAspectRatio="none" aria-hidden="true">
    <defs><linearGradient id="shade" gradientUnits="userSpaceOnUse" x1="742" y1="70" x2="812" y2="30"><stop offset="0" stop-color="#bf3567"/><stop offset="1" stop-color="#ee407a"/></linearGradient></defs>
    <path d="M0 0h4096v139H0z" fill="url(#shade)"/>
    <path d="M1697 0Q1770 75 1860 139H4096V0z" fill="#a23fb4"/>
    <path d="M0 0h684q58 78 136 139H0z" fill="#ff7387"/>
  </svg>
  <div class="dock">
    <button class="on run" aria-label="Firefox"><svg viewBox="0 0 128 128"><defs><radialGradient id="ff" cx=".75" cy=".15" r="1"><stop offset="0" stop-color="#fff44f"/><stop offset=".35" stop-color="#ffb02e"/><stop offset=".62" stop-color="#ff5634"/><stop offset=".85" stop-color="#ff2a55"/><stop offset="1" stop-color="#e5007d"/></radialGradient><linearGradient id="fp" x1="0" y1="0" x2="0" y2="1"><stop offset="0" stop-color="#c238d8"/><stop offset=".5" stop-color="#8a4cf5"/><stop offset="1" stop-color="#4b37a5"/></linearGradient><linearGradient id="fo" x1="0" y1="0" x2=".3" y2="1"><stop offset="0" stop-color="#ffa61c"/><stop offset=".5" stop-color="#ff7139"/><stop offset="1" stop-color="#ff3750"/></linearGradient></defs><path d="M81 4q12 10 18 24l6 10 3-8q12 18 12 39a56 52 0 0 1-112 2q-1-22 13-42l4 8 10-12 3 14q10-2 22 2 2-26 21-37z" fill="url(#ff)"/><ellipse cx="64" cy="66" rx="25" ry="30" fill="url(#fp)"/><path d="M29 23q-2 12 4 20 12-2 17 4 6 1 14 7-2 8-16 10-14 14-4 27 16 18 36 4 12-12 8-30 14 16 6 34-12 18-42 14Q16 108 12 74q0-28 17-51z" fill="url(#fo)"/><path d="M81 4q-22 14-20 34 24 4 28 30 0 18-10 30 30-10 24-52Q92 30 81 4z" fill="#ffdf3d" opacity=".75"/></svg></button>
    <button aria-label="Thunderbird"><svg viewBox="0 0 128 128"><defs><linearGradient id="tb" x1="0" y1="0" x2="1" y2="1"><stop offset="0" stop-color="#1b8cf0"/><stop offset="1" stop-color="#0c62cc"/></linearGradient><linearGradient id="te" x1="0" y1="0" x2="0" y2="1"><stop offset="0" stop-color="#fff"/><stop offset="1" stop-color="#a5d5fb"/></linearGradient></defs><path d="M25 18q12 12 14 30 4-42 53-43 24 4 32 20l-8 0 9 13-9 0q12 22 11 42-6 46-62 47Q2 122 1 66q0-12 3-22l6 14q0-26 15-40z" fill="url(#tb)"/><path d="M6 90Q24 112 64 112q44-2 60-52 8 28-10 48-20 19-49 19-40-2-59-37z" fill="#0b57b5"/><path d="M43 56Q46 10 92 5q18 2 26 8-14-6-30-2-34 8-36 30z" fill="#9d8ef5"/><path d="M22 58Q8 80 18 102q2-24 4-44z" fill="#7a86ee"/><path d="M22 100q-8-18 0-42" fill="none" stroke="#8d8af0" stroke-width="2"/><ellipse cx="68" cy="23" rx="4" ry="3.500" fill="#fff"/><path d="M64 38q31 2 31 28 0 22-28 26 2 8 14 10-20 2-24-12-24-4-24-26 2-26 31-26z" fill="url(#te)"/><path d="M37 53l27 22 27-22" fill="none" stroke="#dcecfb" stroke-width="3"/></svg></button>
    <button aria-label="파일"><svg viewBox="0 0 128 128"><defs><linearGradient id="fl"><stop offset="0" stop-color="#77294f"/><stop offset="1" stop-color="#e0521f"/></linearGradient><linearGradient id="fg" x1="0" y1="0" x2="1" y2="1"><stop offset="0" stop-color="#929292"/><stop offset="1" stop-color="#b8b8b8"/></linearGradient></defs><path d="M14 12h32q4 0 5 4l3 4h60q6 0 6 6v30H8V18q0-6 6-6z" fill="url(#fl)"/><rect x="8" y="32" width="112" height="84" rx="8" fill="url(#fg)"/><rect x="46" y="50" width="36" height="8" rx="3" fill="#fff"/></svg></button>
    <button aria-label="리듬박스"><svg viewBox="0 0 128 128"><rect x="20" y="8" width="88" height="112" rx="8" fill="#e3ded3"/><circle cx="64" cy="64" r="36" fill="#4a4a4a"/><circle cx="64" cy="64" r="31" fill="#171722"/><circle cx="64" cy="64" r="26" fill="#f2bd12"/><circle cx="64" cy="64" r="11" fill="#050505"/><circle cx="64" cy="64" r="7" fill="#333"/></svg></button>
    <button aria-label="Writer"><svg viewBox="0 0 128 128"><defs><linearGradient id="wr" x1="0" y1="0" x2="0" y2="1"><stop offset="0" stop-color="#06588e"/><stop offset="1" stop-color="#4ba9d6"/></linearGradient></defs><path d="M28 8h42l38 40v64q0 8-8 8H28q-8 0-8-8V16q0-8 8-8zM88 8h12q8 0 8 8v14q-12-6-20-22z" fill="url(#wr)"/><path d="M64 8h6l38 40v64q0 8-8 8H64z" fill="#fff" opacity=".1"/><path d="M34 48h20v5H34zM34 58h20v5H34zM34 68h20v5H34zM34 78h60v5H34zM34 88h60v5H34zM34 98h45v5H34z" fill="#fff"/><rect x="61" y="49" width="32" height="23" rx="2" fill="#43b4ea" stroke="#fff" stroke-width="2.500"/><path d="M63 71l8-12 6 8 5-5 9 9z" fill="#fff"/></svg></button>
    <button aria-label="앱 센터"><svg viewBox="0 0 128 128"><path d="M28 8h72q7 0 8 8l3 96q0 8-8 8H24q-8 0-8-8l4-96q1-8 8-8z" fill="#f26a30"/><path d="M28 8h72q7 0 8 8l1 26H19l1-26q1-8 8-8z" fill="#f25218"/><path d="M42 14q0 28 22 28t22-28" fill="none" stroke="#fff6ee" stroke-width="4.500"/><path d="M60 50h8l27 62H83L64 66 45 112H33z" fill="#fff4ec"/><rect x="30" y="86" width="68" height="12" rx="5" fill="#fff"/><path d="M35 90h58v4H35z" fill="#ffd6c8"/></svg></button>
    <button aria-label="소프트웨어"><svg viewBox="0 0 128 128"><defs><linearGradient id="sq"><stop offset="0" stop-color="#ee3f6d"/><stop offset="1" stop-color="#f5924a"/></linearGradient><linearGradient id="ci" x1="0" y1="0" x2="0" y2="1"><stop offset="0" stop-color="#5048e0"/><stop offset="1" stop-color="#b54fd0"/></linearGradient><linearGradient id="tr"><stop offset="0" stop-color="#31d8b8"/><stop offset="1" stop-color="#1a4fc0"/></linearGradient></defs><path d="M47 24V18q2-14 17-14t17 14v6" fill="none" stroke="#d2d2d8" stroke-width="4"/><rect x="8" y="20" width="112" height="88" rx="8" fill="#f6f5f4"/><path d="M16 20h96q8 0 8 8v36H8V28q0-8 8-8z" fill="#e4e4e2"/><circle cx="80" cy="48" r="13" fill="url(#ci)"/><rect x="36" y="52" width="26" height="26" rx="2" fill="url(#sq)"/><path d="M66 83l24-13v26z" fill="url(#tr)"/></svg></button>
    <button aria-label="도움말"><svg viewBox="0 0 128 128"><circle cx="64" cy="64" r="56" fill="#2b90e0"/><path d="M9 69h110a56 56 0 0 1-110 0z" fill="#46a5e8"/><path d="M50 36q3-4 14-4 19 0 19 15 0 8-10 16-10 9-10 16" fill="none" stroke="#fff" stroke-width="6.500"/><circle cx="64" cy="96" r="6" fill="#fff"/></svg></button>
    <button aria-label="터미널"><svg viewBox="0 0 128 128"><rect x="8" y="20" width="112" height="88" rx="8" fill="#555"/><path d="M16 20h96q8 0 8 8v32H8V28q0-8 8-8z" fill="#4a4a4a"/><path d="M27 34l15 8-15 7" fill="none" stroke="#fff" stroke-width="5"/><path d="M45 56h20v4H45z" fill="#fff"/></svg></button>
    <button aria-label="Steam"><svg viewBox="0 0 128 128"><defs><linearGradient id="st" x1="0" y1="0" x2="0" y2="1"><stop offset="0" stop-color="#121c2c"/><stop offset=".25" stop-color="#06183c"/><stop offset=".6" stop-color="#122f63"/><stop offset="1" stop-color="#1189bb"/></linearGradient><linearGradient id="sa" x1="1" y1="0" x2="0" y2="1"><stop offset="0" stop-color="#6d5566"/><stop offset=".8" stop-color="#fff"/></linearGradient><clipPath id="sc"><circle cx="64" cy="64" r="64"/></clipPath></defs><circle cx="64" cy="64" r="64" fill="url(#st)"/><g clip-path="url(#sc)"><path d="M0 59l32 15q6-4 12-4l18-24a24 24 0 1 1 26 26L62 88a18 18 0 0 1-35 5L0 82z" fill="url(#sa)"/></g><circle cx="86" cy="48" r="16" fill="none" stroke="#0b1f49" stroke-width="3.500"/><path d="M34 98l6 3a12 12 0 1 0 10-22l-6-3" fill="none" stroke="#14497e" stroke-width="3.500"/></svg></button>
    <button aria-label="Visual Studio Code"><svg viewBox="0 0 128 128"><path d="M92 8L8 83q-1 3 1 5l7 6q3 1 5 0l71-55z" fill="#0065a9"/><path d="M92 120L8 45q-1-3 1-5l7-6q3-1 5 0l71 55z" fill="#007acc"/><path d="M92 8l25 12q3 2 3 5v78q0 3-3 5l-25 12q-4 0-4-4l4-4V16l-4-4q0-4 4-4z" fill="#1f9cf0"/></svg></button>
    <button aria-label="원격 제어"><svg viewBox="0 0 128 128"><circle cx="64" cy="64" r="58" fill="#f6f4ee"/><path d="M22 86A46 46 0 0 1 100 36" fill="none" stroke="#4a90dc" stroke-width="10"/><path d="M106 42A46 46 0 0 1 28 92" fill="none" stroke="#1faa70" stroke-width="10"/><path d="M41 35l30 19-30 20V60l10-6-10-6z" fill="#1faa70"/><path d="M86 50L57 69l29 20V76l-11-7 11-6z" fill="#4a90dc"/></svg></button>
    <span class="dock-sep"></span>
    <button class="run" aria-label="소프트웨어 업데이트"><svg viewBox="0 0 128 128"><circle cx="64" cy="64" r="56" fill="#ebebeb"/><circle cx="64" cy="64" r="44" fill="#5b5b5b"/><path d="M21 22l9 0v6h8v-8L30 14zM107 106l-9 0v-6h-8v8l8 6z" fill="#444"/><path d="M60 27h8l27 62H83L64 42 45 89H33z" fill="#f4f4f4"/><rect x="30" y="63" width="68" height="12" rx="5" fill="#f2f2f2"/><path d="M34 67h60v4H34z" fill="#bbb"/><path d="M34 67h40v4H34z" fill="#ea5a24"/></svg></button>
    <button aria-label="휴지통"><svg viewBox="0 0 128 128"><defs><linearGradient id="ts" x1="0" y1="0" x2="0" y2="1"><stop offset="0" stop-color="#b4b4b4"/><stop offset="1" stop-color="#d6d6d6"/></linearGradient></defs><rect x="20" y="8" width="88" height="112" rx="8" fill="url(#ts)"/><rect x="28" y="16" width="72" height="20" rx="3" fill="#777"/><text x="64" y="101" text-anchor="middle" class="recycle">♻</text></svg></button>
    <button aria-label="앱 표시"><svg viewBox="0 0 128 128"><g fill="none" stroke="#f2f2f2" stroke-width="11"><path d="M34 48A38 38 0 0 1 63 27"/><path d="M99 43A38 38 0 0 1 100 90"/><path d="M35 84A38 38 0 0 0 62 104"/></g><g fill="#f2f2f2"><circle cx="28" cy="64" r="13"/><circle cx="84" cy="35" r="13"/><circle cx="81" cy="98" r="13"/></g></svg></button>
  </div>
</footer>
<script src="charts.js"></script>
</body>
</html>
```
FILE: styles.css
```css
* { box-sizing: border-box; }
html, body { height: 100%; margin: 0; }
body {
  display: flex; flex-direction: column; overflow: hidden;
  font: 21px/24px "Liberation Sans", "Noto Sans CJK KR", sans-serif;
  color: #000; background: #cecece;
}
button { font: inherit; color: inherit; border: 0; padding: 0; background: none; }
a { color: inherit; text-decoration: none; }
h1, h2, ul, dl, dd { margin: 0; padding: 0; font-weight: 400; font-size: 21px; }
ul { list-style: none; }
svg { fill: currentColor; flex: none; display: block; }
.sprite { position: absolute; width: 0; height: 0; }
.s16 { width: 16px; height: 16px; }
.s20 { width: 20px; height: 20px; }
.s24 { width: 24px; height: 24px; }
.s26 { width: 26px; height: 26px; }
.s28 { width: 28px; height: 28px; }
.s30 { width: 30px; height: 30px; }

/* system bar */
.sysbar {
  flex: none; height: 51px; display: grid; grid-template-columns: 1fr auto 1fr; align-items: center;
  padding: 0 26px 0 24px; background: #131313; color: #f2f2f2;
  font-family: "Noto Sans", "Noto Sans CJK KR", sans-serif; font-size: 22px;
}
.sysbar-clock { font-size: 23px; }
.sysbar-left { display: flex; align-items: center; gap: 10px; }
.ws-pill { width: 46px; height: 13px; border-radius: 7px; background: #f2f2f2; }
.ws-dot { width: 9px; height: 9px; border-radius: 50%; background: #858585; }
.sysbar-right { display: flex; align-items: center; justify-content: flex-end; gap: 18px; }
.sysbar-right span { margin-left: -14px; }
.sysbar-right .m2 { margin-right: 10px; }
.sysbar-right .m3 { font-size: 23px; }
.sysbar-right .m4 { margin: 0 40px 0 62px; }

/* browser chrome */
.tabbar { flex: none; height: 71px; display: flex; align-items: center; background: #ebebeb; color: #333; font-family: "Noto Sans", "Noto Sans CJK KR", sans-serif; font-size: 24px; }
.tabview { width: 69px; height: 71px; padding-left: 17px; border-right: 2px solid #c8c8c8; }
.tabs { flex: 1; display: flex; align-items: center; padding-left: 6px; gap: 6px; }
.tab { width: 354px; height: 58px; display: flex; align-items: center; gap: 9px; padding: 0 19px; border-radius: 7px; }
.tab.active { background: #fff; box-shadow: 0 0 6px rgba(0, 0, 0, .35); font-size: 22px; }
.favicon { width: 26px; height: 26px; }
.tab-title { flex: 1; overflow: hidden; white-space: nowrap; line-height: 34px; }
.tab.active .tab-title { -webkit-mask-image: linear-gradient(90deg, #000 86%, transparent); mask-image: linear-gradient(90deg, #000 86%, transparent); }
.newtab { margin-left: 18px; }
.winctl { display: flex; align-items: center; gap: 20px; padding-right: 10px; }
.winctl button { width: 34px; height: 34px; border-radius: 50%; background: #dadada; display: grid; place-items: center; }
.winctl .plain { background: none; margin-right: 69px; }
.navbar { flex: none; height: 64px; display: flex; align-items: center; background: #fff; border-bottom: 2px solid #c6c6c6; color: #333; }
.navbtns { width: 370px; display: flex; gap: 32px; padding-left: 25px; }
.dim { opacity: .4; }
.urlbar { flex: 1; height: 51px; display: flex; align-items: center; gap: 19px; padding: 0 11px 0 12px; background: #f1f1f1; border-radius: 7px; color: #444; }
.url { flex: 1; font: 24px/34px "Noto Sans", sans-serif; color: #8d8d8d; margin-left: -4px; }
.url b { font-weight: 400; color: #222; }
.navright { width: 428px; display: flex; justify-content: flex-end; gap: 32px; padding-right: 26px; }

/* buttons and fields */
.btn {
  height: 39px; display: inline-flex; align-items: center; gap: 8px; padding: 0 8px; flex: none;
  background: #f5f5f5; border: 2px solid #d8d8d8; border-radius: 5px; white-space: nowrap;
}
.btn .icon { color: #5a5a5a; }
.icon { width: 20px; height: 22px; }
.caret { width: 16px; height: 16px; color: #b5b5b5; }
.btn.blue { background: #3892d4; border-color: #157fcc; color: #fff; }
.btn.blue .icon, .btn.dark .icon { color: #fff; }
.btn.dark { background: #464d4d; border-color: #a3b5b8; color: #fff; }
.split .caret { box-sizing: content-box; border-left: 2px solid #ddd; padding: 6px 0 6px 6px; }
.combo { position: relative; display: flex; align-items: center; background: #fff; }
.combo select { width: 100%; height: 37px; padding: 0 10px; border: 0; background: none; font: inherit; color: inherit; appearance: none; }
.combo .caret { position: absolute; right: 10px; top: 10px; }

/* application frame */
.app { flex: 1; min-height: 0; display: flex; flex-direction: column; padding-bottom: 9px; }
.app-head { flex: none; height: 55px; display: flex; align-items: center; padding: 0 2px 0 11px; }
.logo-x { width: 46px; height: 42px; }
.wordmark { margin-left: 3px; font: bold 38px/42px "DejaVu Sans", sans-serif; }
.wordmark i { font-style: normal; color: #e57000; }
.version { margin-left: 7px; font-size: 22px; padding-top: 2px; }
.search { width: 269px; height: 37px; margin-left: 14px; padding: 0 10px; border: 0; font: inherit; }
.search::placeholder { color: #808080; }
.head-btns { margin-left: auto; padding-right: 8px; display: flex; gap: 10px; }

.main { flex: 1; min-height: 0; display: flex; gap: 9px; padding: 0 9px 0 10px; }
.side { width: 477px; flex: none; display: flex; flex-direction: column; }
.side-top { display: flex; justify-content: space-between; padding-bottom: 11px; height: 49px; }
.combo.view { width: 430px; height: 37px; margin-top: 1px; }
.btn.gear { width: 37px; height: 39px; justify-content: center; padding: 0; }
.tree { flex: 1; background: #fff; margin-bottom: 2px; }
.tree li { height: 36px; display: flex; align-items: center; }
.tree .sel { background: #c1ddf1; }
.tree a { margin-left: 11px; }
.twist { width: 16px; height: 16px; color: #b5b5b5; }
.ticon { width: 26px; height: 26px; color: #555; }
.l0 { padding-left: 8px; }
.l0 .ticon { width: 27px; margin-left: 2px; }
.l0 a { padding-left: 2px; }
.l1 { padding-left: 32px; }
.node { position: relative; width: 32px; }
.badge { position: absolute; left: 14px; top: 9px; width: 18px; height: 18px; border-radius: 50%; outline: 1px solid #c1ddf1; }
.l2 { padding-left: 76px; }
.tree .net { margin-left: 14px; }
.tree .st { height: 37px; }
.gauge { width: 14px; height: 31px; margin: 0 5px 0 2px; border: 2px solid #555; border-radius: 2px; }
.gauge.used { background: linear-gradient(#555, #555) center bottom 2px / 8px 1px no-repeat; }
.tree .st a { margin-left: 0; }

.content { flex: 1; min-width: 0; display: flex; flex-direction: column; background: #fff; }
.content-head { flex: none; height: 59px; display: flex; align-items: center; gap: 14px; padding: 0 14px 0 13px; border-bottom: 2px solid #cfcfcf; }
.content-head h1 { flex: 1; }
.content-head .btn { gap: 9px; }
.content-body { flex: 1; min-height: 0; display: flex; }
.menu {
  flex: none; align-self: stretch; width: 240px; padding: 8px 0 415px; background: #f5f5f5; border-right: 2px solid #cfcfcf;
  display: grid; grid-auto-rows: 38px; align-content: space-between;
}
.menu a { display: flex; align-items: center; gap: 13px; padding: 0 23px 0 15px; }
.menu .icon { width: 22px; }
.menu .sub { padding-left: 40px; }
.menu .sel { background: #c1ddf1; }
.menu .open::after, .menu .closed::after { content: ""; margin-left: auto; border: 9px solid transparent; border-top: 7px solid #cfcfcf; border-bottom: 0; }
.menu .closed::after { margin-right: 3px; border: 7px solid transparent; border-left: 9px solid #cfcfcf; border-right: 0; }

.summary { flex: 1; min-width: 0; display: flex; flex-direction: column; }
.summary-bar { flex: none; height: 61px; display: flex; align-items: center; justify-content: space-between; padding: 0 12px 0 13px; border-bottom: 2px solid #cfcfcf; }
.summary-bar .btn { padding: 0 12px; }
.combo.range { width: 272px; border: 2px solid #cfcfcf; }
.panels { flex: 1; min-height: 0; overflow: hidden; display: grid; grid-template-columns: 1fr 1fr; gap: 16px; padding: 16px; align-content: start; }
.panel { border: 2px solid #cfcfcf; border-top: 0; position: relative; }
.panel > header, .status > h2 { height: 56px; margin: 0 -2px; display: flex; align-items: center; background: #f5f5f5; border-bottom: 2px solid #cfcfcf; padding: 0 16px; }
.panel h2 { font-size: 24px; line-height: 30px; color: #157fcc; }
.panel.status > h2 { height: 58px; padding-top: 4px; }
.panel header h2 { flex: 1; padding-top: 3px; }
.legend { display: flex; height: 40px; margin-right: 8px; border: 2px solid #cfcfcf; border-radius: 5px; background: #fff; color: #333; }
.legend li { display: flex; align-items: center; gap: 10px; padding: 0 15px 0 10px; }
.legend li + li { border-left: 2px solid #cfcfcf; }
.legend li::before { content: ""; width: 16px; height: 16px; border-radius: 50%; background: #94ae0a; border: 1px solid #7d9308; }
.legend .b::before { background: #115fa6; border-color: #0d4f8c; }
.collapse { width: 28px; height: 28px; }
.chart { width: 100%; height: auto; }
.chart text { font-size: 21px; text-anchor: middle; fill: #000; }
.chart .axis-title { font-size: 26px; }

.status-body { display: grid; grid-template-columns: 1fr 1fr; column-gap: 32px; padding: 27px 24px 0; }
.meters { display: flex; flex-direction: column; gap: 10px; }
.meter { display: grid; grid-template-columns: 1fr auto; grid-template-rows: 24px 8px; row-gap: 4px; }
.meter span { display: flex; align-items: center; white-space: nowrap; }
.meter svg { width: 22px; height: 22px; margin: 0 8px 0 3px; }
.meter svg.big { width: 25px; height: 25px; margin: 0 8px 0 5px; }
.bar { grid-column: 1 / -1; background: #f5f5f5; }
.bar div { height: 8px; min-width: 1px; background: #c1ddf1; }
.meter.gap { margin-top: 25px; }
.meters.right { padding-top: 20px; }
.meter.io { margin-bottom: 51px; }
.status dl { grid-column: 1 / -1; padding-top: 37px; }
.status dl div { display: flex; justify-content: space-between; line-height: 38px; }
.status dd { display: flex; align-items: center; }
.status dd svg { width: 24px; height: 24px; margin-right: 5px; }
.status dd .second { margin-left: 11px; }
.status dd .nxt { width: 20px; height: 22px; margin: 0 -3px 0 0; }

/* task log */
.splitter { flex: none; height: 8px; display: flex; justify-content: center; }
.splitter span { width: 76px; background: #dcdcdc; display: flex; justify-content: center; color: #c2c2c2; }
.splitter svg { width: 16px; height: 8px; }
.log { flex: none; margin: 0 9px 0 9px; background: #fafafa; padding-bottom: 10px; }
.log-tabs { height: 57px; display: flex; align-items: center; gap: 14px; padding-left: 16px; background: #f5f5f5; }
.log-tabs button { height: 38px; padding: 0 11px 0 15px; border-radius: 4px; }
.log-tabs .on { padding: 0 11px; background: #3892d4; color: #fff; }
.log table { width: 100%; table-layout: fixed; border-spacing: 0; border-top: 2px solid #cfcfcf; }
.c-time { width: 241px; }
.c-end { width: 240px; }
.c-node { width: 160px; }
.c-user { width: 240px; }
.c-state { width: 321px; }
.log th { height: 49px; padding: 0 0 0 16px; text-align: left; font-weight: 400; color: #666; background: #fff; border-bottom: 2px solid #cfcfcf; border-right: 2px solid #cfcfcf; }
.log .sorted { background: #ecf4fb; }
.sort { display: inline-block; width: 16px; height: 26px; margin-left: 6px; vertical-align: middle; }
.log td { height: 40px; padding: 4px 0 0 16px; background: #fff; border-bottom: 2px solid #cfcfcf; }
.log tbody tr:nth-child(even) td { background: #fafafa; }

/* desktop and dock */
.desktop { flex: none; position: relative; height: 139px; display: flex; justify-content: center; align-items: flex-start; padding-top: 1px; }
.wallpaper { position: absolute; left: 0; top: 0; width: 100%; height: 100%; }
.dock { position: relative; display: flex; gap: 6px; padding: 3px 5px; border: 2px solid #4b4b4b; border-radius: 16px; background: rgba(20, 22, 18, .78); }
.dock button { position: relative; width: 122px; height: 122px; display: grid; place-items: center; border-radius: 24px; }
.dock button svg { width: 102px; height: 102px; }
.dock .on { background: rgba(255, 255, 255, .18); }
.dock .run::after { content: ""; position: absolute; left: 55px; bottom: 1px; width: 11px; height: 11px; border-radius: 50%; background: #d64a18; }
.dock-sep { width: 2px; height: 52px; align-self: center; margin: 0 -3px; background: #66566a; }
.recycle { font: 44px "DejaVu Sans", sans-serif; fill: #1f8a1c; }
```
FILE: charts.js
```js
// Area charts of the node summary: 70 samples, one per minute from 17:48.
const TOP = 16, BOTTOM = 400, RIGHT = 1634, LAST = 69;
const GREEN = ['#94ae0a', '#5a6a06'], BLUE = ['#115fa6', '#0a3d6e'];

function fill(base, changes) {
  const a = new Array(LAST + 1).fill(base);
  for (const [start, values] of changes) values.forEach((v, i) => { a[start + i] = v; });
  return a;
}

function time(minute) {
  const t = 17 * 60 + 48 + minute;
  return Math.floor(t / 60) + ':' + String(t % 60).padStart(2, '0') + ':00';
}

function draw(id, c) {
  const x = i => c.left + (RIGHT - c.left) * i / LAST;
  const y = v => BOTTOM - (BOTTOM - TOP) * v / c.max;
  let grid = '', ticks = '', out = '', i;
  const rows = c.labels.length - 1;
  for (i = 0; i <= rows; i++) {
    const yy = TOP + (BOTTOM - TOP) * i / rows;
    grid += `M${c.left} ${yy}H${RIGHT}`;
    ticks += `M${c.left - 8} ${yy}H${c.left}`;
  }
  for (i = 0; i <= LAST; i++) {
    grid += `M${x(i)} ${TOP}V${BOTTOM}`;
    ticks += `M${x(i)} ${BOTTOM}v7`;
  }
  out += `<path d="${grid}" fill="none" stroke="#dcdcdc" stroke-width="1.6"/>`;
  for (const [data, [color, line]] of c.series) {
    const pts = data.map((v, k) => `${x(k).toFixed(1)} ${y(v).toFixed(1)}`).join('L');
    out += `<path d="M${c.left} ${BOTTOM}L${pts}V${BOTTOM}z" fill="${color}" opacity=".6"/>`;
    out += `<path d="M${pts}" fill="none" stroke="${line}" stroke-width="3" opacity=".6"/>`;
  }
  out += `<path d="${ticks}M${c.left} ${TOP}V${BOTTOM}H${RIGHT}" fill="none" stroke="#000" stroke-width="1.6"/>`;
  c.labels.forEach((t, k) => {
    out += `<text x="${c.labelX}" y="${TOP + (BOTTOM - TOP) * k / rows + 8}">${t}</text>`;
  });
  for (const m of c.times) {
    out += `<text x="${x(m) + 2}" y="${BOTTOM + 36}">2024-11-22</text>`;
    out += `<text x="${x(m) + 2}" y="${BOTTOM + 65}">${time(m)}</text>`;
  }
  if (c.title) out += `<text class="axis-title" transform="translate(48 207) rotate(-90)">${c.title}</text>`;
  if (c.marker) out += `<circle cx="${x(c.marker)}" cy="${y(c.series[0][0][c.marker])}" r="9" fill="#94ae0a" stroke="#566606" stroke-width="3"/>`;
  document.getElementById(id).innerHTML = out;
}

draw('chart-cpu', {
  left: 103, labelX: 72, max: 4, title: '%',
  labels: ['4', '3.5', '3', '2.5', '2', '1.5', '1', '0.5', '0'],
  times: [0, 5, 11, 16, 21, 27, 32, 38, 43, 49, 54, 59, 65],
  series: [
    [fill(.33, [[0, [3.85, .47, .3, .285, .28, .55, .47, .34, .34, .32, .335, .33, .325, .345, .325, .35, .325, .34, .33, .325, .35, .335, .335, .35, .345]],
      [29, [.34]], [35, [.345]], [38, [.345]], [41, [.34, .33, .355, .36, .355, .355, .35, .35, .34, .36, 1.31, .405, 1.095, .51, .815, .535, .505, .4, .685, .758, .51, .81, .79, .38, .355, .405, 1.15, .345, .34]]]), GREEN],
    [fill(.015, [[0, [.2, .1]], [53, [.065, .015, .06, .12, .035, .02, 3.61, .025, .025, .2, .03]], [67, [.16, .02]]]), BLUE]
  ]
});

draw('chart-load', {
  left: 105, labelX: 73, max: 1.6, title: '부하 평균', marker: 60,
  labels: ['1.6', '1.4', '1.2', '1', '0.8', '0.6', '0.4', '0.2', '0'],
  times: [0, 5, 11, 17, 22, 28, 34, 39, 45, 50, 56, 62, 67],
  series: [[fill(.004, [[0, [1.59, .77, .285, .108, .037, .03, .14, .115, .05, .018, .006]],
    [22, [.047, .03, .037, .045, .11, .05, .018, .006]], [40, [.055, .025, .008]], [44, [.037, .083, .035, .013]],
    [51, [.017, .042, .018, .005, .047, .02, .007]], [59, [.083, .055, .02, .006]], [64, [.037, .08, .042, .017]]]), GREEN]]
});

draw('chart-mem', {
  left: 117, labelX: 82, max: 16, title: 'Bytes',
  labels: ['16 Gi', '14 Gi', '12 Gi', '10 Gi', '8 Gi', '6 Gi', '4 Gi', '2 Gi', '0'],
  times: [0, 6, 12, 18, 24, 30, 36, 42, 48, 54, 60, 66],
  series: [[fill(15.4, []), GREEN], [fill(1.3, [[0, [1.36, 1.27, 1.27, 1.27, 1.27, 1.28]], [55, [1.33, 1.34, 1.34]]]), BLUE]]
});

draw('chart-net', {
  left: 84, labelX: 45, max: 550,
  labels: ['550 k', '500 k', '450 k', '400 k', '350 k', '300 k', '250 k', '200 k', '150 k', '100 k', '50 k', '0'],
  times: [],
  series: [[fill(4, [[0, [545, 15]]]), GREEN], [fill(2, []), BLUE]]
});
```
